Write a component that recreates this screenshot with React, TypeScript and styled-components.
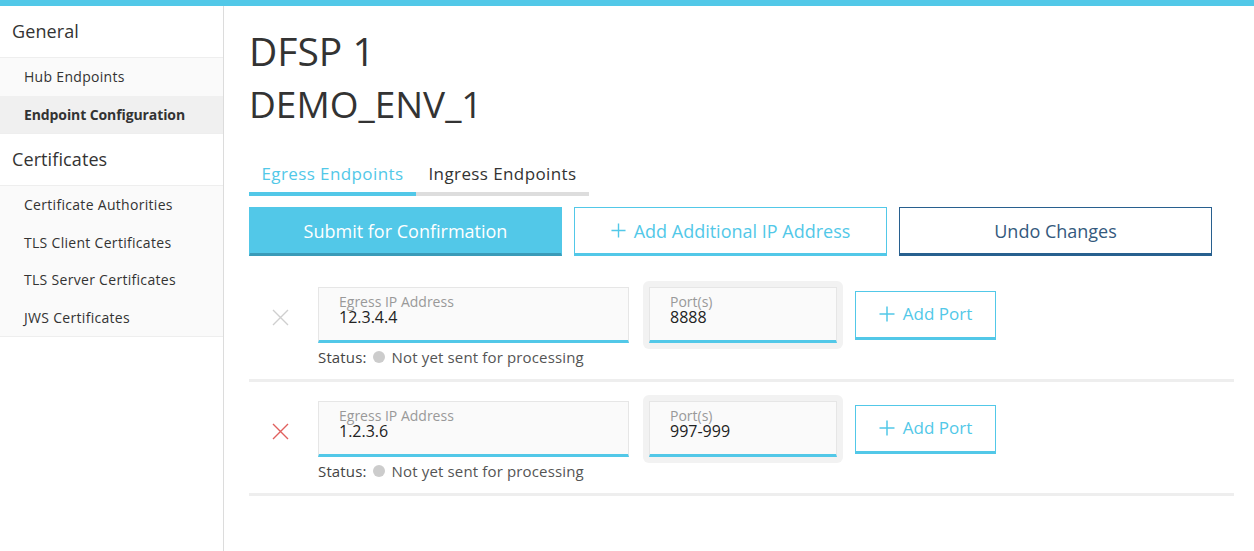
import React from "react";
import styled, { createGlobalStyle, css } from "styled-components";

const BLUE = "#52c8e8";
const BLUE_DARK = "#3a9bb8";
const NAVY = "#28608f";

const GlobalStyle = createGlobalStyle`
  html, body { margin: 0; padding: 0; background: #fff; }
  body { font-family: "Open Sans", "Noto Sans", sans-serif; color: #333; }
  * { box-sizing: border-box; }
`;

const Page = styled.div`
  display: flex;
  flex-direction: column;
  min-height: 551px;
`;

const TopBar = styled.div`
  flex: none;
  height: 6px;
  background: ${BLUE};
`;

const Body = styled.div`
  flex: 1;
  display: flex;
`;

const Sidebar = styled.nav`
  flex: none;
  width: 224px;
  border-right: 1px solid #dcdcdc;
  background: #fff;
`;

const MenuHeader = styled.div`
  padding: 13px 12px 14px;
  font-size: 18px;
  line-height: 24px;
  letter-spacing: 0.1px;
  color: #333;
  border-bottom: 1px solid #eee;
`;

const MenuGroup = styled.div`
  background: #fafafa;
  border-bottom: 1px solid #eee;
`;

const MenuItem = styled.div<{ $active?: boolean }>`
  height: 37.5px;
  display: flex;
  align-items: center;
  padding: 1px 0 0 24px;
  font-size: 14px;
  line-height: 20px;
  color: #333;
  font-weight: ${(p) => (p.$active ? 700 : 400)};
  letter-spacing: ${(p) => (p.$active ? "-0.1px" : "0.3px")};
  background: ${(p) => (p.$active ? "#f0f0f0" : "transparent")};
`;

const Main = styled.main`
  flex: 1;
  padding: 21px 20px 0 25px;
`;

const Title = styled.h1`
  margin: 0;
  font-size: 39px;
  line-height: 48px;
  font-weight: 400;
  color: #333;
`;

const Subtitle = styled.h2`
  margin: 7px 0 0;
  font-size: 37px;
  line-height: 44px;
  font-weight: 400;
  color: #333;
`;

const Tabs = styled.div`
  display: flex;
  margin-top: 38px;
`;

const Tab = styled.div<{ $active?: boolean }>`
  padding: 0 12.5px 8px;
  font-size: 17px;
  line-height: 20px;
  letter-spacing: 0.4px;
  color: ${(p) => (p.$active ? BLUE : "#333")};
  border-bottom: 4px solid ${(p) => (p.$active ? BLUE : "#dddddd")};
`;

const Actions = styled.div`
  display: flex;
  gap: 12px;
  margin-top: 11px;
`;

type Variant = "primary" | "outline" | "navy";

const Button = styled.button<{ $variant: Variant; $width: number; $size?: number }>`
  width: ${(p) => p.$width}px;
  height: 49px;
  display: flex;
  align-items: center;
  justify-content: center;
  gap: 8px;
  padding: 0;
  font-family: inherit;
  font-size: ${(p) => p.$size ?? 18}px;
  line-height: 24px;
  font-weight: 500;
  cursor: pointer;
  border-radius: 0;
  border-style: solid;
  border-width: 1px 1px 3px;
  ${(p) =>
    p.$variant === "primary"
      ? css`
          background: ${BLUE};
          color: #fff;
          border-color: ${BLUE} ${BLUE} ${BLUE_DARK};
        `
      : p.$variant === "outline"
      ? css`
          background: #fff;
          color: ${BLUE};
          border-color: ${BLUE};
        `
      : css`
          background: #fff;
          color: #34597d;
          border-color: ${NAVY};
        `}
`;

const EndpointList = styled.div`
  margin-top: 12px;
`;

const EndpointRow = styled.div`
  display: flex;
  padding: 19px 0 12px;
  border-bottom: 3px solid #eeeeee;
`;

const IconCell = styled.div`
  flex: none;
  width: 69px;
  height: 56px;
  display: flex;
  align-items: center;
  padding: 4px 0 0 23px;
`;

const RowContent = styled.div`
  display: flex;
  flex-direction: column;
`;

const FieldsRow = styled.div`
  display: flex;
  align-items: center;
  gap: 20px;
`;

const Field = styled.div<{ $width: number }>`
  width: ${(p) => p.$width}px;
  height: 56px;
  padding: 7px 20px 0;
  background: #fafafa;
  border: 1px solid #e6e6e6;
  border-bottom: 3px solid ${BLUE};
`;

const FocusRing = styled.div`
  margin: -6px -8px -6px -6px;
  padding: 6px;
  background: #f2f2f2;
  border-radius: 6px;
`;

const FieldLabel = styled.div`
  font-size: 14px;
  line-height: 14px;
  color: #999;
`;

const FieldValue = styled.div`
  font-size: 16px;
  line-height: 16px;
  color: #222;
`;

const Status = styled.div`
  display: flex;
  align-items: center;
  margin-top: 4px;
  font-size: 15px;
  line-height: 20px;
  letter-spacing: 0.15px;
  color: #444;
`;

const Dot = styled.span`
  width: 12px;
  height: 12px;
  border-radius: 50%;
  background: #cccccc;
  margin: 0 7px 0 6px;
`;

const StatusText = styled.span`
  color: #555;
`;

const CloseIcon = ({ color }: { color: string }) => (
  <svg width="17" height="17" viewBox="0 0 17 17">
    <path d="M1 1 L16 16 M16 1 L1 16" stroke={color} strokeWidth="1.4" fill="none" />
  </svg>
);

const PlusIcon = ({ size = 16 }: { size?: number }) => (
  <svg width={size} height={size} viewBox="0 0 16 16">
    <path d="M8 0.5 V15.5 M0.5 8 H15.5" stroke="currentColor" strokeWidth="1.5" fill="none" />
  </svg>
);

const endpoints = [
  { ip: "12.3.4.4", ports: "8888", removable: false },
  { ip: "1.2.3.6", ports: "997-999", removable: true },
];

export default function App() {
  return (
    <>
      <GlobalStyle />
      <Page>
        <TopBar />
        <Body>
          <Sidebar>
            <MenuHeader>General</MenuHeader>
            <MenuGroup>
              <MenuItem>Hub Endpoints</MenuItem>
              <MenuItem $active>Endpoint Configuration</MenuItem>
            </MenuGroup>
            <MenuHeader>Certificates</MenuHeader>
            <MenuGroup>
              <MenuItem>Certificate Authorities</MenuItem>
              <MenuItem>TLS Client Certificates</MenuItem>
              <MenuItem>TLS Server Certificates</MenuItem>
              <MenuItem>JWS Certificates</MenuItem>
            </MenuGroup>
          </Sidebar>
          <Main>
            <Title>DFSP 1</Title>
            <Subtitle>DEMO_ENV_1</Subtitle>
            <Tabs>
              <Tab $active>Egress Endpoints</Tab>
              <Tab>Ingress Endpoints</Tab>
            </Tabs>
            <Actions>
              <Button $variant="primary" $width={313}>
                Submit for Confirmation
              </Button>
              <Button $variant="outline" $width={313}>
                <PlusIcon size={15} />
                Add Additional IP Address
              </Button>
              <Button $variant="navy" $width={313}>
                Undo Changes
              </Button>
            </Actions>
            <EndpointList>
              {endpoints.map((ep) => (
                <EndpointRow key={ep.ip}>
                  <IconCell>
                    <CloseIcon color={ep.removable ? "#e0605e" : "#cfcfcf"} />
                  </IconCell>
                  <RowContent>
                    <FieldsRow>
                      <Field $width={311}>
                        <FieldLabel>Egress IP Address</FieldLabel>
                        <FieldValue>{ep.ip}</FieldValue>
                      </Field>
                      <FocusRing>
                        <Field $width={188}>
                          <FieldLabel>Port(s)</FieldLabel>
                          <FieldValue>{ep.ports}</FieldValue>
                        </Field>
                      </FocusRing>
                      <Button $variant="outline" $width={141} $size={17}>
                        <PlusIcon />
                        Add Port
                      </Button>
                    </FieldsRow>
                    <Status>
                      Status:
                      <Dot />
                      <StatusText>Not yet sent for processing</StatusText>
                    </Status>
                  </RowContent>
                </EndpointRow>
              ))}
            </EndpointList>
          </Main>
        </Body>
      </Page>
    </>
  );
}
